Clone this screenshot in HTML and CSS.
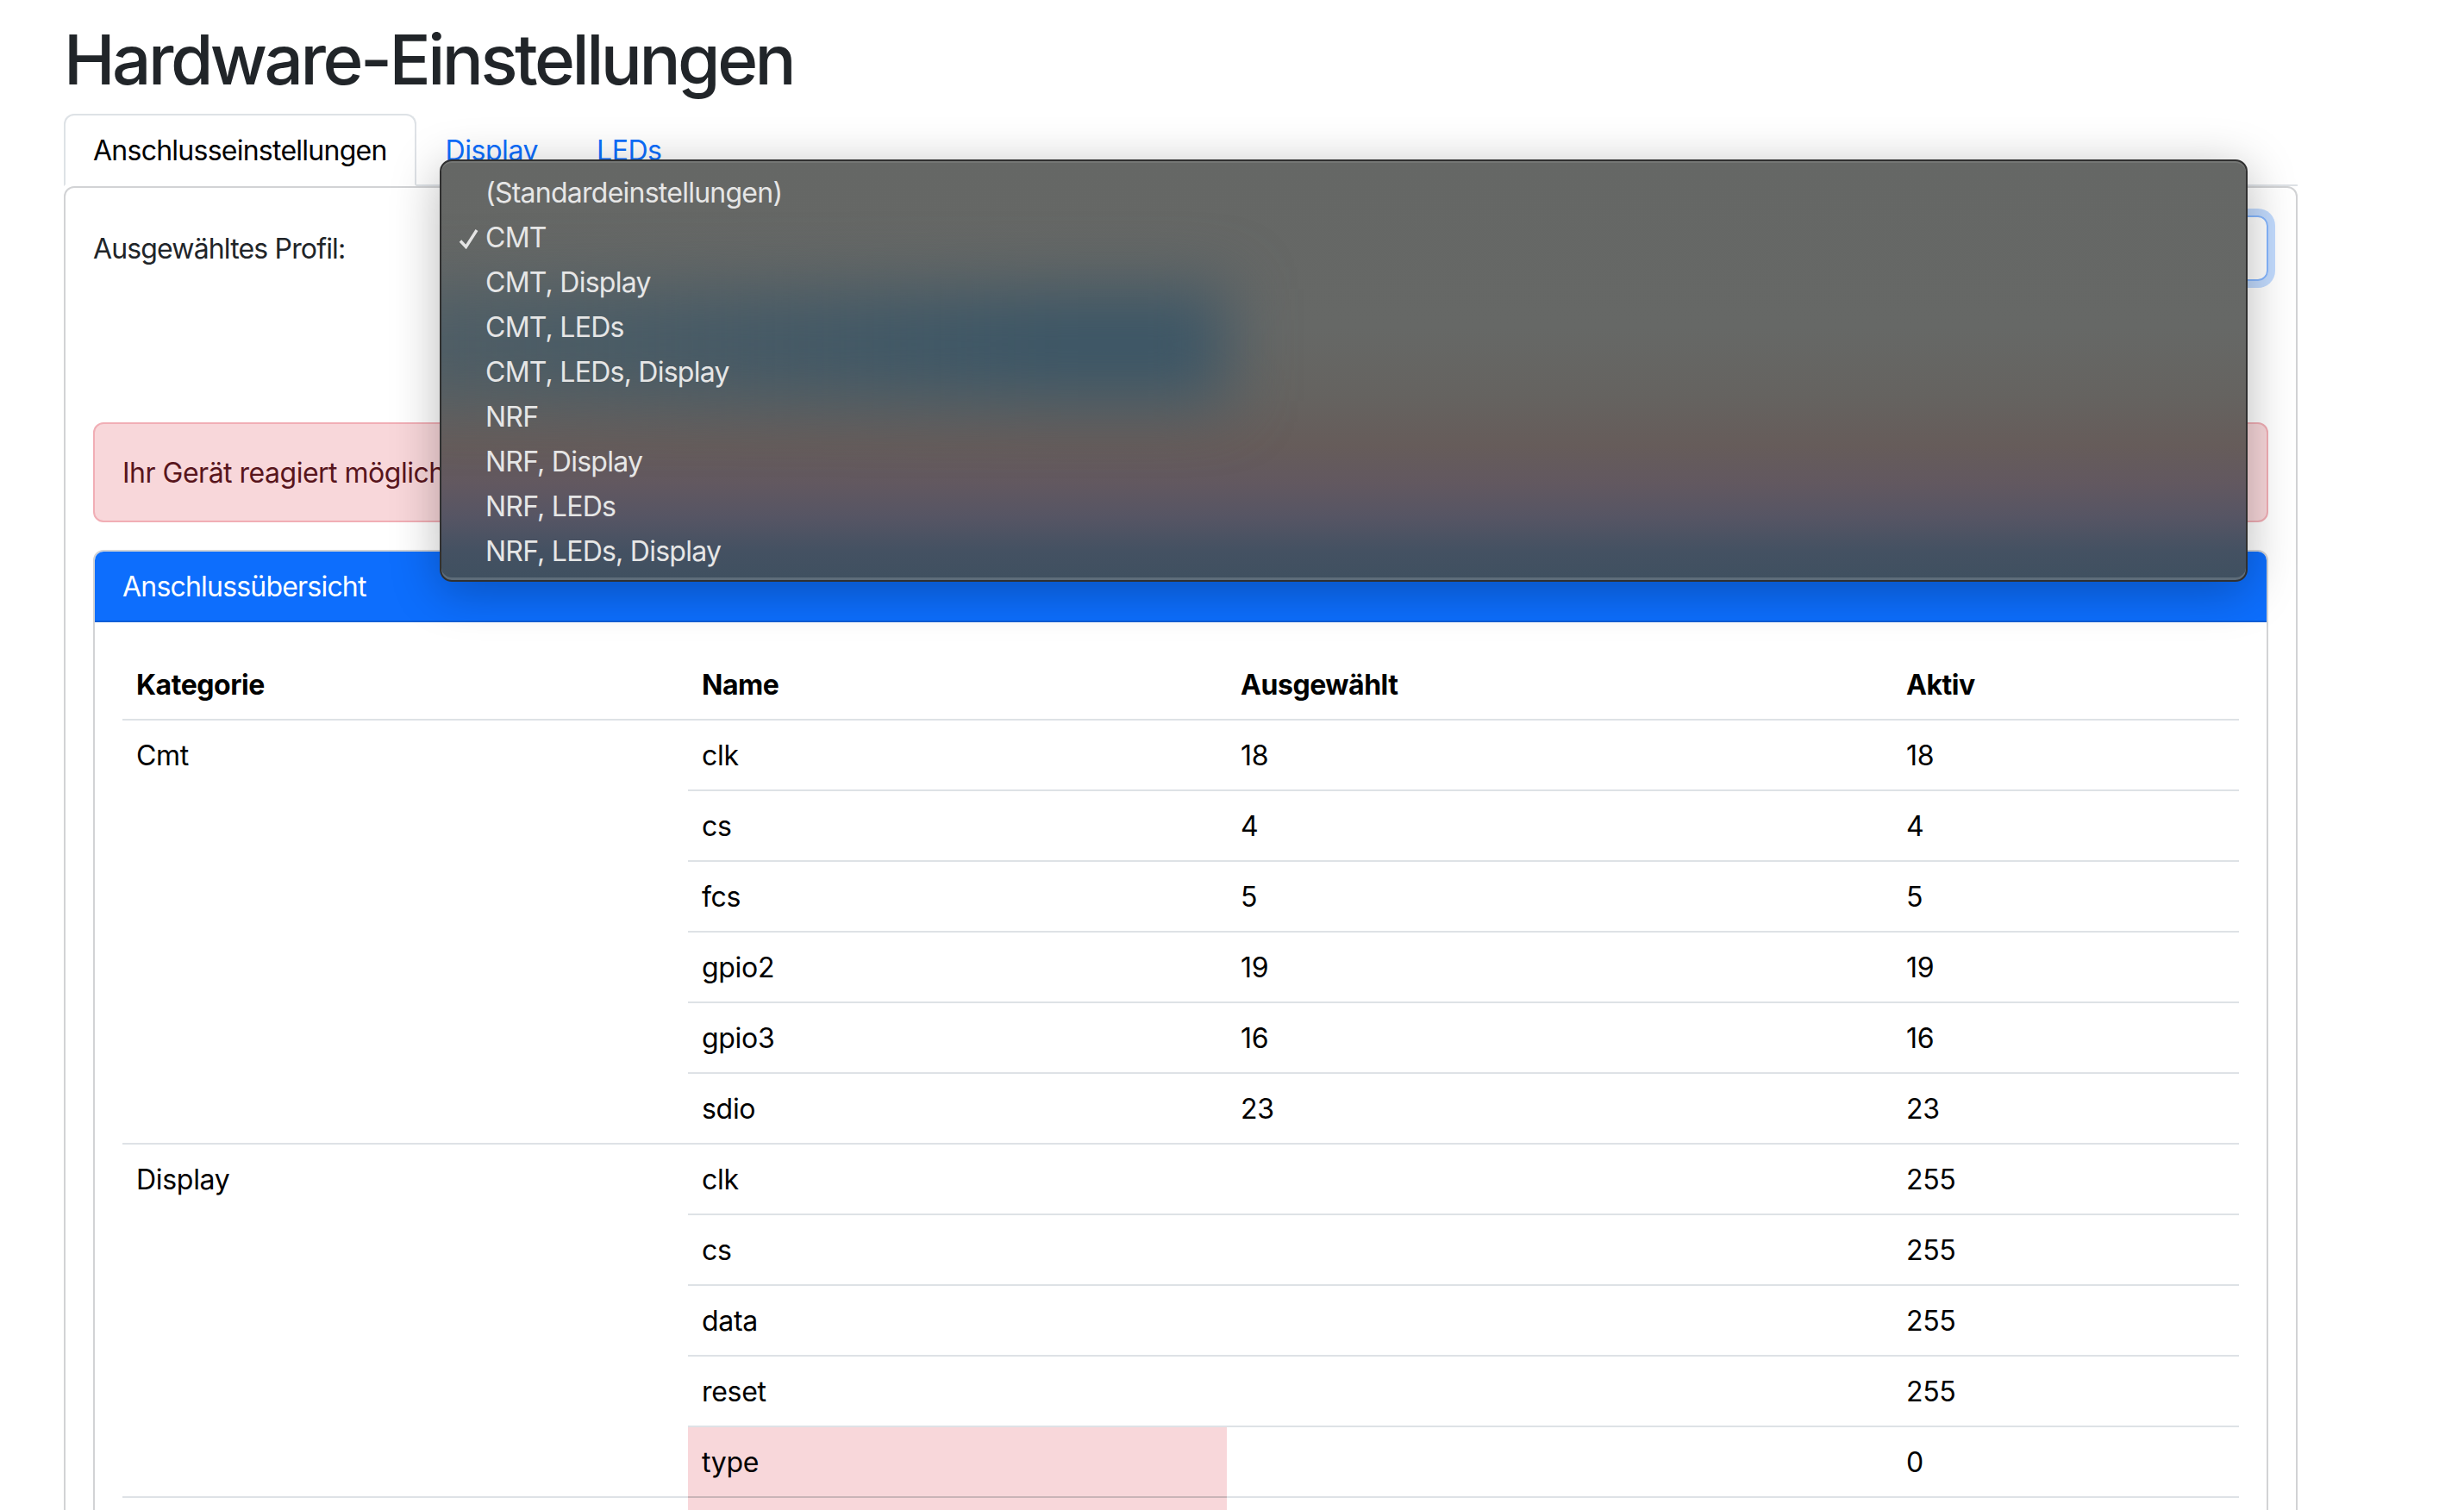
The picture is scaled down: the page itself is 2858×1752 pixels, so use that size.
FILE: index.html
```html
<!DOCTYPE html>
<html lang="de">
<head>
<meta charset="utf-8">
<title>Hardware-Einstellungen</title>
<link rel="stylesheet" href="styles.css">
</head>
<body>
<main class="page">
  <h1 class="title">Hardware-Einstellungen</h1>
  <nav class="tabs">
    <a class="tab tab-active">Anschlusseinstellungen</a>
    <a class="tab">Display</a>
    <a class="tab">LEDs</a>
  </nav>
  <section class="tab-content">
    <div class="form-row">
      <label class="form-label">Ausgewähltes Profil:</label>
      <div class="select"></div>
    </div>
    <div class="alert">Ihr Gerät reagiert möglich</div>
    <div class="card">
      <div class="card-header">Anschlussübersicht</div>
      <div class="card-body">
        <table class="pins">
          <colgroup>
            <col class="col-cat"><col class="col-name"><col class="col-sel"><col class="col-act">
          </colgroup>
          <thead>
            <tr><th>Kategorie</th><th>Name</th><th>Ausgewählt</th><th>Aktiv</th></tr>
          </thead>
          <tbody>
            <tr><td rowspan="6">Cmt</td><td>clk</td><td>18</td><td>18</td></tr>
            <tr><td>cs</td><td>4</td><td>4</td></tr>
            <tr><td>fcs</td><td>5</td><td>5</td></tr>
            <tr><td>gpio2</td><td>19</td><td>19</td></tr>
            <tr><td>gpio3</td><td>16</td><td>16</td></tr>
            <tr><td>sdio</td><td>23</td><td>23</td></tr>
            <tr><td rowspan="5">Display</td><td>clk</td><td></td><td>255</td></tr>
            <tr><td>cs</td><td></td><td>255</td></tr>
            <tr><td>data</td><td></td><td>255</td></tr>
            <tr><td>reset</td><td></td><td>255</td></tr>
            <tr><td class="danger">type</td><td></td><td>0</td></tr>
            <tr><td></td><td class="danger"></td><td></td><td></td></tr>
          </tbody>
        </table>
      </div>
    </div>
  </section>
</main>
<ul class="menu">
  <li class="menu-item">(Standardeinstellungen)</li>
  <li class="menu-item"><svg class="check" width="24" height="24" viewBox="0 0 24 24"><polyline points="2,14.5 8.5,21.5 21,2" fill="none" stroke="#e4e4e4" stroke-width="3.4"/></svg>CMT</li>
  <li class="menu-item">CMT, Display</li>
  <li class="menu-item">CMT, LEDs</li>
  <li class="menu-item">CMT, LEDs, Display</li>
  <li class="menu-item">NRF</li>
  <li class="menu-item">NRF, Display</li>
  <li class="menu-item">NRF, LEDs</li>
  <li class="menu-item">NRF, LEDs, Display</li>
</ul>
</body>
</html>
```
FILE: styles.css
```css
* { box-sizing: border-box; }
html, body { margin: 0; height: 1752px; overflow: hidden; background: #fff; }
body {
  font-family: Inter, "Liberation Sans", sans-serif;
  font-size: 32px;
  line-height: 48px;
  letter-spacing: -.75px;
  color: #212529;
  position: relative;
}
.page { width: 2591px; margin-left: 74px; padding-top: 21px; }
.title {
  margin: 0 0 15px;
  font-size: 80px;
  line-height: 96px;
  font-weight: 500;
  color: #212529;
  letter-spacing: -3.5px;
}
.tabs { display: flex; height: 84px; border-bottom: 2px solid #dee2e6; }
.tab {
  padding: 17px 32px 15px;
  height: 84px;
  border: 2px solid transparent;
  border-radius: 12px 12px 0 0;
  color: #0d6efd;
  letter-spacing: -.45px;
}
.tab-active {
  color: #000;
  background: #fff;
  border-color: #dee2e6 #dee2e6 #fff;
  letter-spacing: -.75px;
}
.tab-content {
  border: 2px solid #d2d3d5;
  border-radius: 12px;
  padding: 32px;
  height: 1700px;
}
.form-row { display: flex; margin-bottom: 164px; }
.form-label { width: 425px; padding-top: 15px; color: #212529; letter-spacing: -.85px; }
.select {
  flex: 1;
  height: 76px;
  border: 2px solid #86b7fe;
  border-radius: 12px;
  box-shadow: 0 0 0 8px rgba(13, 110, 253, .25);
}
.alert {
  padding: 33px 32px 31px;
  margin-bottom: 32px;
  height: 116px;
  border: 2px solid #f1aeb5;
  border-radius: 12px;
  background: #f8d7da;
  color: #58151c;
  letter-spacing: -.5px;
}
.card {
  border: 2px solid #d2d3d5;
  border-radius: 12px;
}
.card-header {
  height: 82px;
  padding: 17px 32px 15px;
  background: #0d6efd;
  border-bottom: 2px solid #0b5ed7;
  border-radius: 10px 10px 0 0;
  color: #fff;
  letter-spacing: -.8px;
}
.card-body { padding: 32px; }
.pins {
  width: 100%;
  border-collapse: separate;
  border-spacing: 0;
  table-layout: fixed;
  color: #000;
  letter-spacing: -.3px;
}
.col-cat { width: 656px; }
.col-name { width: 625px; }
.col-sel { width: 772px; }
.pins th, .pins td {
  height: 82px;
  padding: 17px 16px 15px;
  text-align: left;
  vertical-align: top;
  border-bottom: 2px solid #dee2e6;
}
.pins th { font-weight: 700; letter-spacing: -.45px; }
.pins .danger { background: #f8d7da; border-bottom-color: #c9b4b7; }

.menu {
  position: absolute;
  left: 510px;
  top: 185px;
  width: 2097px;
  height: 490px;
  margin: 0;
  padding: 11px 0 0;
  list-style: none;
  overflow: hidden;
  border: 2px solid #303030;
  border-radius: 14px;
  background: linear-gradient(180deg,
    #656765 0%, #666866 40%, #656360 56%, #665c5a 68%, #625860 77%,
    #565564 85%, #445162 93%, #3f5060 100%);
  box-shadow: 0 10px 56px rgba(0, 0, 0, .28), inset 0 2px 0 rgba(255, 255, 255, .1), inset 0 -3px 0 rgba(255, 255, 255, .16);
  color: #e6e6e6;
}
.menu::before {
  content: "";
  position: absolute;
  left: -120px;
  top: 148px;
  width: 1030px;
  height: 130px;
  background: linear-gradient(90deg, rgba(60, 86, 102, .5), rgba(60, 86, 102, 1) 80%);
  filter: blur(38px);
}
.menu-item {
  position: relative;
  height: 52px;
  line-height: 52px;
  padding-left: 51px;
}
.check { position: absolute; left: 20px; top: 15px; }
```
